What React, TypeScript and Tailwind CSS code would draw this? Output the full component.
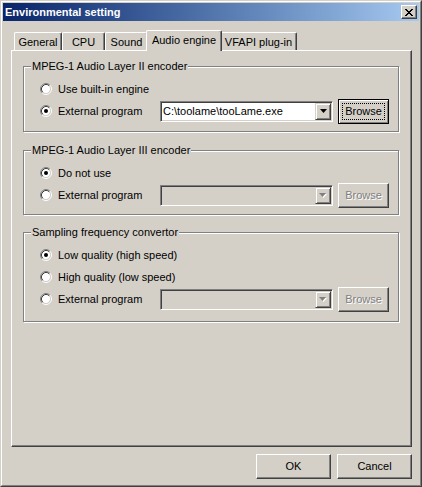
import React from "react";

const raised =
  "border border-t-white border-l-white border-r-[#404040] border-b-[#404040] shadow-[inset_-1px_-1px_0_#808080]";

function Radio({ checked }: { checked?: boolean }) {
  return (
    <svg width="12" height="12" viewBox="0 0 12 12" className="shrink-0">
      <circle cx="6" cy="6" r="4.2" fill="#fff" />
      <path d="M2.11 9.89 A5.5 5.5 0 0 1 9.89 2.11" stroke="#808080" fill="none" />
      <path d="M9.89 2.11 A5.5 5.5 0 0 1 2.11 9.89" stroke="#fff" fill="none" />
      <path d="M2.82 9.18 A4.5 4.5 0 0 1 9.18 2.82" stroke="#404040" fill="none" />
      <path d="M9.18 2.82 A4.5 4.5 0 0 1 2.82 9.18" stroke="#d4d0c8" fill="none" />
      {checked && <circle cx="6" cy="6" r="2" fill="#000" />}
    </svg>
  );
}

function Combo({ value, disabled }: { value?: string; disabled?: boolean }) {
  return (
    <div
      className={`w-[173px] h-[21px] shrink-0 flex p-[1px] border border-t-[#808080] border-l-[#808080] border-r-white border-b-white shadow-[inset_1px_1px_0_#404040,inset_-1px_-1px_0_#d4d0c8] ${
        disabled ? "bg-[#d4d0c8]" : "bg-white"
      }`}
    >
      <div className="flex-1 pl-[1px] leading-[17px] whitespace-nowrap overflow-hidden">{value}</div>
      <div className="w-[16px] h-[17px] flex items-center justify-center bg-[#d4d0c8] border border-t-[#d4d0c8] border-l-[#d4d0c8] border-r-[#404040] border-b-[#404040] shadow-[inset_1px_1px_0_#fff,inset_-1px_-1px_0_#808080]">
        {disabled ? (
          <svg width="8" height="5" viewBox="0 0 8 5">
            <polygon points="1,1 8,1 4.5,5" fill="#fff" />
            <polygon points="0,0 7,0 3.5,4" fill="#808080" />
          </svg>
        ) : (
          <svg width="7" height="4" viewBox="0 0 7 4">
            <polygon points="0,0 7,0 3.5,4" fill="#000" />
          </svg>
        )}
      </div>
    </div>
  );
}

function Browse({ isDefault, disabled }: { isDefault?: boolean; disabled?: boolean }) {
  if (isDefault) {
    return (
      <div className="w-[51px] h-[25px] shrink-0 border border-black p-[1px] shadow-[inset_1px_1px_0_#fff,inset_-1px_-1px_0_#808080] bg-[#d4d0c8]">
        <div className="w-full h-full p-[2px]">
          <div className="w-full h-full border border-dotted border-black flex items-center justify-center leading-[13px]">
            Browse
          </div>
        </div>
      </div>
    );
  }
  return (
    <div
      className={`w-[51px] h-[25px] shrink-0 flex items-center justify-center bg-[#d4d0c8] ${raised} ${
        disabled ? "text-[#808080] [text-shadow:1px_1px_0_#fff]" : ""
      }`}
    >
      Browse
    </div>
  );
}

function Row({
  checked,
  label,
  combo,
  comboValue,
  comboDisabled,
  browseDefault,
}: {
  checked?: boolean;
  label: string;
  combo?: boolean;
  comboValue?: string;
  comboDisabled?: boolean;
  browseDefault?: boolean;
}) {
  return (
    <div className="flex items-center h-[22px]">
      <Radio checked={checked} />
      <span className="ml-[6px] w-[102px] shrink-0 whitespace-nowrap">{label}</span>
      {combo && (
        <>
          <Combo value={comboValue} disabled={comboDisabled} />
          <div className="ml-[5px]">
            <Browse isDefault={browseDefault} disabled={comboDisabled} />
          </div>
        </>
      )}
    </div>
  );
}

function Group({ title, h, children }: { title: string; h: string; children: React.ReactNode }) {
  return (
    <div
      className={`relative w-[376px] shrink-0 border border-[#808080] shadow-[inset_1px_1px_0_#fff,1px_1px_0_#fff] ${h}`}
    >
      <span className="absolute left-[7px] top-[-8px] px-[1px] bg-[#d4d0c8] leading-[14px] whitespace-nowrap">
        {title}
      </span>
      <div className="pt-[11px] pl-[16px] flex flex-col">{children}</div>
    </div>
  );
}

function Tab({ label, w, selected }: { label: string; w: string; selected?: boolean }) {
  if (selected) {
    return (
      <div
        className={`relative z-10 ${w} h-[21px] -mb-[1px] -ml-[2px] -mr-[2px] shrink-0 bg-[#d4d0c8] border-t border-l border-r border-t-white border-l-white border-r-[#404040] shadow-[inset_-1px_0_0_#808080] rounded-tl-[2px] rounded-tr-[2px] flex justify-center pt-[3px] leading-[13px]`}
      >
        {label}
      </div>
    );
  }
  return (
    <div
      className={`${w} h-[18px] shrink-0 bg-[#d4d0c8] border-t border-l border-r border-t-white border-l-white border-r-[#404040] shadow-[inset_-1px_0_0_#808080] rounded-tl-[2px] rounded-tr-[2px] flex justify-center pt-[3px] leading-[13px]`}
    >
      {label}
    </div>
  );
}

export default function App() {
  return (
    <div className="w-[422px] h-[487px] font-['Liberation_Sans',Arial,sans-serif] text-[11px] leading-[13px] text-black border border-t-[#d4d0c8] border-l-[#d4d0c8] border-r-[#404040] border-b-[#404040]">
      <div className="w-full h-full bg-[#d4d0c8] border border-t-white border-l-white border-r-[#808080] border-b-[#808080] p-[1px] flex flex-col">
        {/* Title bar */}
        <div className="h-[18px] shrink-0 flex items-center bg-gradient-to-r from-[#0a246a] to-[#a6caf0] pl-[2px] pr-[2px]">
          <span className="text-white font-bold text-[11px] leading-[18px] flex-1">Environmental setting</span>
          <div className="w-[16px] h-[14px] flex items-center justify-center bg-[#d4d0c8] border border-t-white border-l-white border-r-[#404040] border-b-[#404040] shadow-[inset_-1px_-1px_0_#808080]">
            <svg width="8" height="7" viewBox="0 0 8 7" shapeRendering="crispEdges">
              <path
                d="M0 0h2v1h-2zM6 0h2v1h-2zM1 1h2v1h-2zM5 1h2v1h-2zM2 2h4v1h-4zM3 3h2v1h-2zM2 4h4v1h-4zM1 5h2v1h-2zM5 5h2v1h-2zM0 6h2v1h-2zM6 6h2v1h-2z"
                fill="#000"
              />
            </svg>
          </div>
        </div>

        {/* Body */}
        <div className="flex flex-col pl-[8px] pr-[7px] pt-[9px]">
          {/* Tabs */}
          <div className="h-[20px] flex items-end pl-[3px]">
            <Tab label="General" w="w-[48px]" />
            <Tab label="CPU" w="w-[43px]" />
            <Tab label="Sound" w="w-[43px]" />
            <Tab label="Audio engine" w="w-[76px]" selected />
            <Tab label="VFAPI plug-in" w="w-[77px]" />
          </div>

          {/* Panel */}
          <div className="w-[401px] h-[397px] border border-t-white border-l-white border-r-[#404040] border-b-[#404040] shadow-[inset_-1px_-1px_0_#808080] pl-[11px] pt-[15px] flex flex-col">
            <Group title="MPEG-1 Audio Layer II encoder" h="h-[66px]">
              <Row label="Use built-in engine" />
              <Row
                checked
                label="External program"
                combo
                comboValue="C:\toolame\tooLame.exe"
                browseDefault
              />
            </Group>
            <div className="h-[18px] shrink-0" />
            <Group title="MPEG-1 Audio Layer III encoder" h="h-[65px]">
              <Row checked label="Do not use" />
              <Row label="External program" combo comboDisabled />
            </Group>
            <div className="h-[17px] shrink-0" />
            <Group title="Sampling frequency convertor" h="h-[90px]">
              <Row checked label="Low quality (high speed)" />
              <Row label="High quality (low speed)" />
              <Row label="External program" combo comboDisabled />
            </Group>
          </div>

          {/* Buttons */}
          <div className="flex justify-end gap-[6px] mt-[7px]">
            <div className={`w-[75px] h-[25px] flex items-center justify-center bg-[#d4d0c8] ${raised}`}>OK</div>
            <div className={`w-[75px] h-[25px] flex items-center justify-center bg-[#d4d0c8] ${raised}`}>Cancel</div>
          </div>
        </div>
      </div>
    </div>
  );
}
